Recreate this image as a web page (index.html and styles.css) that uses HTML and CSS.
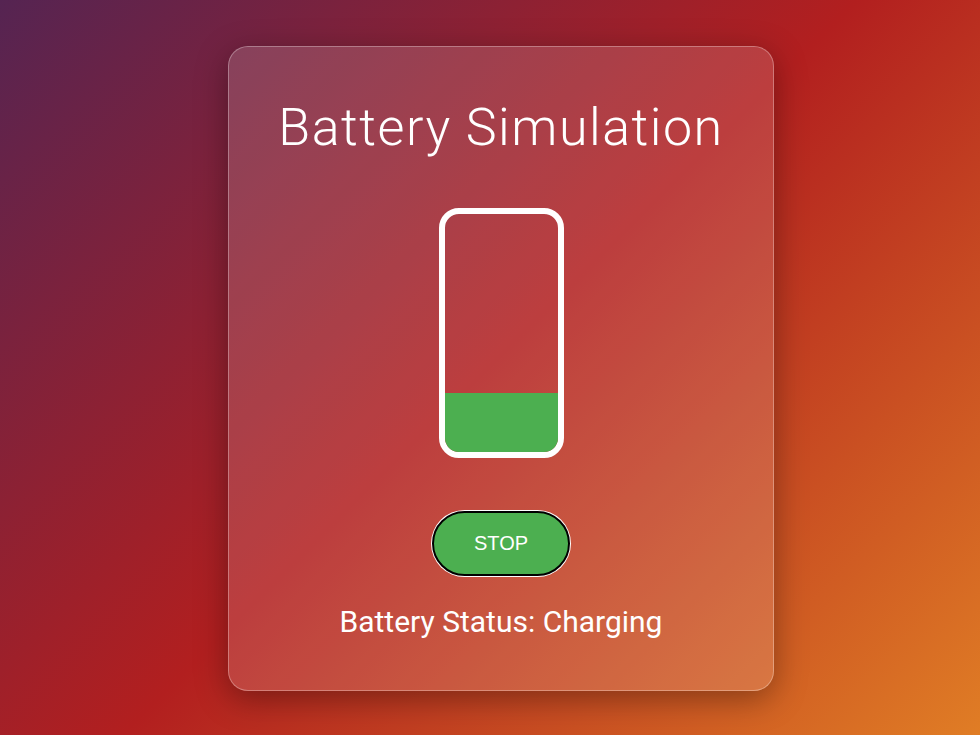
FILE: index.html
```html
<!DOCTYPE html>
<html>
<head>
<meta charset="utf-8">
<link rel="stylesheet" href="styles.css">
</head>
<body>
<main class="stage">
  <section class="card">
    <h1 class="title">Battery Simulation</h1>
    <div class="battery">
      <div class="level" style="height:25%"></div>
    </div>
    <button class="toggle">STOP</button>
    <p class="status">Battery Status: Charging</p>
  </section>
</main>
</body>
</html>
```

FILE: styles.css
```css
html, body {
  margin: 0;
  height: 100%;
}
body {
  background: linear-gradient(135deg, #552452 0%, #b21f1f 50%, #e07d25 100%);
  font-family: Roboto, "Liberation Sans", sans-serif;
  color: #fff;
}
.stage {
  height: 100%;
  display: flex;
  align-items: center;
  justify-content: center;
  padding-left: 22px;
  padding-top: 2px;
  box-sizing: border-box;
}
.card {
  width: 546px;
  height: 645px;
  box-sizing: border-box;
  display: flex;
  flex-direction: column;
  align-items: center;
  padding-top: 50px;
  background: rgba(255, 255, 255, 0.14);
  border: 1px solid rgba(255, 255, 255, 0.3);
  border-radius: 20px;
  box-shadow: 0 8px 32px rgba(0, 0, 0, 0.35);
}
.title {
  margin: 0;
  font-size: 52px;
  font-weight: 300;
  line-height: normal;
  letter-spacing: 1.5px;
}
.battery {
  margin-top: 50px;
  width: 125px;
  height: 250px;
  box-sizing: border-box;
  border: 6px solid #fff;
  border-radius: 20px;
  overflow: hidden;
  display: flex;
  flex-direction: column;
  justify-content: flex-end;
}
.level {
  background: #4caf50;
  width: 100%;
}
.toggle {
  margin-top: 53px;
  width: 138px;
  height: 65px;
  border-radius: 33px;
  background: #4caf50;
  border: 2px solid #000;
  box-shadow: 0 0 0 1px #fff;
  color: #fff;
  font-family: "Liberation Sans", Arial, sans-serif;
  font-size: 20px;
  cursor: pointer;
}
.status {
  margin: 28px 0 0;
  font-size: 30px;
  line-height: normal;
}
```
